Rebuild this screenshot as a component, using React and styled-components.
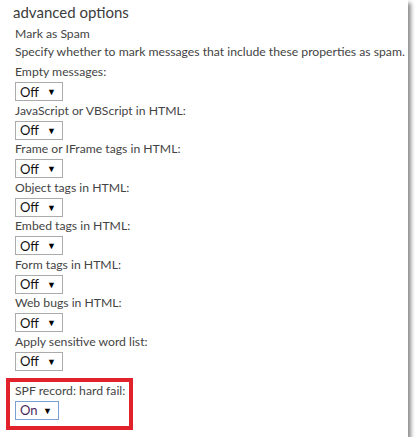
import React from 'react';
import styled, { createGlobalStyle } from 'styled-components';

const GlobalStyle = createGlobalStyle`
  body {
    margin: 0;
    background: #ffffff;
    font-family: Lato, 'Liberation Sans', sans-serif;
  }
`;

const Panel = styled.div`
  width: 408px;
  height: 437px;
  box-sizing: border-box;
  background: #ffffff;
  box-shadow: 3px 3px 4px rgba(0, 0, 0, 0.45);
  padding-top: 1px;
`;

const Title = styled.h2`
  margin: 0 0 2px 0;
  padding-left: 13px;
  font-size: 15px;
  font-weight: 400;
  line-height: 22px;
  color: #3c3c3c;
`;

const Body = styled.div`
  padding-left: 15px;
`;

const Line = styled.div`
  font-size: 12.2px;
  line-height: 18px;
  color: #444444;
  margin-bottom: ${({ gap }) => gap || 0}px;
  white-space: nowrap;
`;

const Row = styled.div`
  margin-bottom: 0.57px;
`;

const Select = styled.div`
  margin-top: 1px;
  width: ${({ width }) => width}px;
  height: 19px;
  box-sizing: border-box;
  border: 1px solid ${({ focused }) => (focused ? '#7a9fd4' : '#ababab')};
  display: flex;
  align-items: center;
  justify-content: space-between;
  padding: 0 6px 0 4px;
  font-size: 13px;
  color: ${({ focused }) => (focused ? '#4a1f5c' : '#111111')};
`;

const Arrow = styled.span`
  font-size: 9px;
  color: #000000;
`;

const Highlight = styled.div`
  margin: 7px 0 0 -9px;
  width: 127px;
  box-sizing: border-box;
  border: 4px solid #e2222b;
  padding: 0 0 6px 5px;
`;

const options = [
  'Empty messages:',
  'JavaScript or VBScript in HTML:',
  'Frame or IFrame tags in HTML:',
  'Object tags in HTML:',
  'Embed tags in HTML:',
  'Form tags in HTML:',
  'Web bugs in HTML:',
  'Apply sensitive word list:',
];

const Dropdown = ({ value, width, focused }) => (
  <Select width={width} focused={focused}>
    <span>{value}</span>
    <Arrow>▼</Arrow>
  </Select>
);

const App = () => (
  <>
    <GlobalStyle />
    <Panel>
      <Title>advanced options</Title>
      <Body>
        <Line>Mark as Spam</Line>
        <Line gap={2}>Specify whether to mark messages that include these properties as spam.</Line>
        {options.map(label => (
          <Row key={label}>
            <Line>{label}</Line>
            <Dropdown value="Off" width={48} />
          </Row>
        ))}
        <Highlight>
          <Line>SPF record: hard fail:</Line>
          <Dropdown value="On" width={44} focused />
        </Highlight>
      </Body>
    </Panel>
  </>
);

export default App;
